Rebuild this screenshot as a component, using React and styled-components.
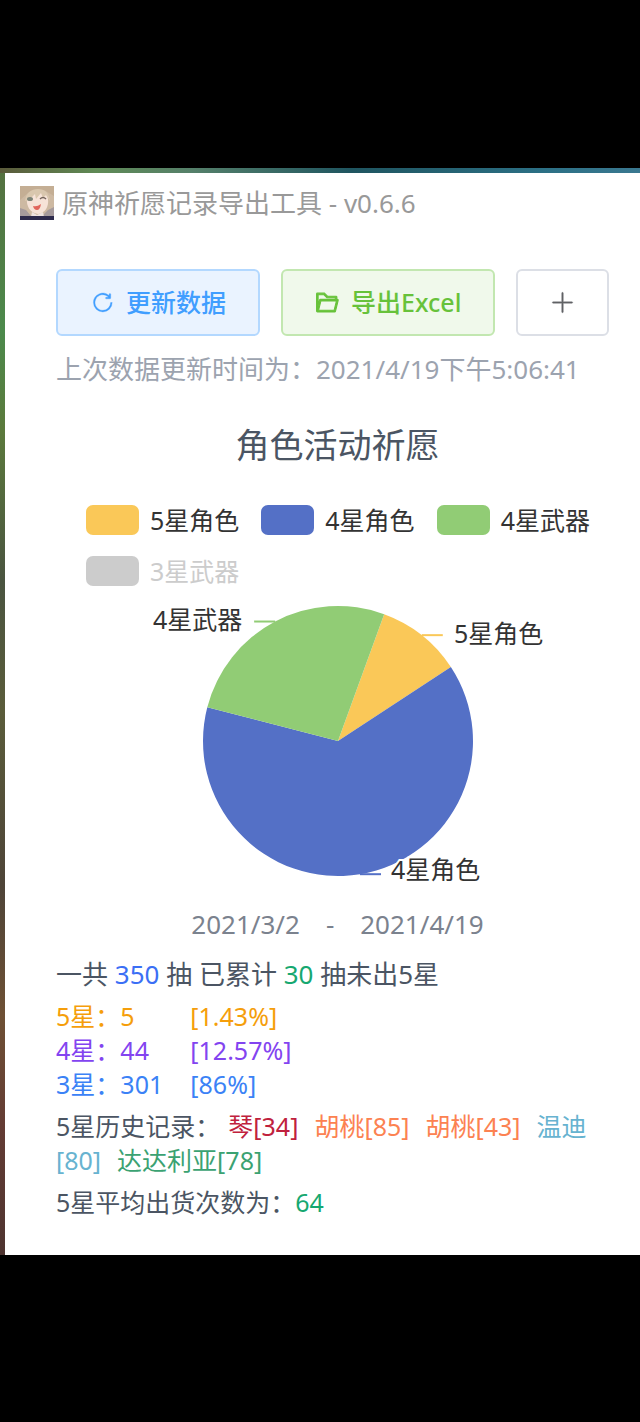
import React from 'react'
import styled, { createGlobalStyle } from 'styled-components'

const legend = [
  { name: '5星角色', color: '#fac858' },
  { name: '4星角色', color: '#5470c6' },
  { name: '4星武器', color: '#91cc75' },
  { name: '3星武器', color: '#cccccc', off: true },
]

const slices = [
  { name: '5星角色', value: 5, color: '#fac858', x: 336, y: 43 },
  { name: '4星角色', value: 31, color: '#5470c6', x: 273, y: 279 },
  { name: '4星武器', value: 13, color: '#91cc75', x: 35, y: 29 },
]

const rates = [
  { name: '5星', count: 5, percent: '1.43%', color: '#f59e0b' },
  { name: '4星', count: 44, percent: '12.57%', color: '#8344f0' },
  { name: '3星', count: 301, percent: '86%', color: '#3b82f6' },
]

const history = [
  { name: '琴', count: 34, color: '#c0213d' },
  { name: '胡桃', count: 85, color: '#fc8251' },
  { name: '胡桃', count: 43, color: '#fc8251' },
  { name: '温迪', count: 80, color: '#67b3d0' },
  { name: '达达利亚', count: 78, color: '#3ba272' },
]

const CX = 220
const CY = 141
const R = 135
const START = 20

const point = (deg) => {
  const rad = (deg * Math.PI) / 180
  return [CX + R * Math.sin(rad), CY - R * Math.cos(rad)]
}

const PieChart = () => {
  const total = slices.reduce((sum, item) => sum + item.value, 0)
  let angle = START

  const parts = slices.map((item) => {
    const from = angle
    const to = angle + (item.value / total) * 360
    angle = to
    const [x1, y1] = point(from)
    const [x2, y2] = point(to)
    const [mx, my] = point((from + to) / 2)
    const large = to - from > 180 ? 1 : 0
    return {
      ...item,
      path: `M${CX} ${CY}L${x1} ${y1}A${R} ${R} 0 ${large} 1 ${x2} ${y2}Z`,
      line: `M${mx} ${my}H${mx < CX ? mx - 21 : mx + 21}`,
    }
  })

  return (
    <Chart viewBox="0 0 440 290" role="img" aria-label="角色活动祈愿">
      {parts.map((item) => (
        <path key={item.name} d={item.path} fill={item.color} />
      ))}
      {parts.map((item) => (
        <path key={item.name} d={item.line} stroke={item.color} strokeWidth="2" />
      ))}
      {parts.map((item) => (
        <ChartLabel key={item.name} x={item.x} y={item.y}>
          {item.name}
        </ChartLabel>
      ))}
    </Chart>
  )
}

const Avatar = () => (
  <AvatarIcon viewBox="0 0 34 34" aria-hidden="true">
    <rect width="34" height="34" fill="#cdb9a2" />
    <path d="M0 0h34v10L24 4 9 6 0 14z" fill="#c4ae94" />
    <path d="M7 12C9 6 13 5 18 5s9 2 10 8c1 8-3 14-10 15C10 27 6 20 7 12z" fill="#f6e3d8" />
    <path d="M5 15C6 7 11 3 18 3c7 0 11 4 12 12l-4-6-3 3-2-5-5 6-1-5-6 6z" fill="#d9c7ae" />
    <ellipse cx="10" cy="13" rx="3" ry="2" fill="#7d8478" />
    <path d="M20 13q3-3 6 0" stroke="#75655c" strokeWidth="1.4" fill="none" />
    <path d="M13 20q4 1 8-2-1 6-4 6t-4-4z" fill="#e0655c" />
    <path d="M0 22l6 2 5 6h11l6-6 6-3v13H0z" fill="#a59a9c" />
    <path d="M12 26l5 3 6-3 1 5H11z" fill="#eee3df" />
    <rect y="30" width="34" height="4" fill="#2d2a4c" />
  </AvatarIcon>
)

const App = () => (
  <Screen>
    <GlobalStyle />
    <Desktop>
      <Window>
        <TitleBar>
          <Avatar />
          <span>原神祈愿记录导出工具 - v0.6.6</span>
        </TitleBar>
        <Main>
          <Toolbar>
            <Button $kind="primary">
              <ButtonIcon viewBox="0 0 1024 1024">
                <path d="M784.512 230.272v-50.56a32 32 0 1 1 64 0v149.056a32 32 0 0 1-32 32H667.52a32 32 0 1 1 0-64h92.992A320 320 0 1 0 524.8 833.152a320 320 0 0 0 320-320h64a384 384 0 0 1-384 384 384 384 0 0 1-384-384 384 384 0 0 1 643.712-282.88z" />
              </ButtonIcon>
              更新数据
            </Button>
            <Button $kind="success">
              <ButtonIcon viewBox="0 0 1024 1024" $bold>
                <path d="M878.08 448H241.92l-96 384h636.16l96-384zM832 384v-64H485.76L357.504 192H128v448l57.344-229.76A32 32 0 0 1 216.32 384H832zm-24.96 512H96a32 32 0 0 1-32-32V160a32 32 0 0 1 32-32h287.872l128.384 128H864a32 32 0 0 1 32 32v96h23.04a32 32 0 0 1 31.04 39.744l-112 448A32 32 0 0 1 807.04 896z" />
              </ButtonIcon>
              导出Excel
            </Button>
            <Button aria-label="添加">
              <ButtonIcon viewBox="0 0 1024 1024">
                <path d="M480 480V128a32 32 0 0 1 64 0v352h352a32 32 0 1 1 0 64H544v352a32 32 0 1 1-64 0V544H128a32 32 0 0 1 0-64h352z" />
              </ButtonIcon>
            </Button>
          </Toolbar>
          <Updated>上次数据更新时间为：2021/4/19下午5:06:41</Updated>
          <Title>角色活动祈愿</Title>
          <Legend>
            {legend.map((item) => (
              <LegendItem key={item.name} $off={item.off}>
                <Swatch $color={item.color} />
                {item.name}
              </LegendItem>
            ))}
          </Legend>
          <PieChart />
          <Period>
            <span>2021/3/2</span>
            <span>-</span>
            <span>2021/4/19</span>
          </Period>
          <Summary>
            一共 <Color $color="#3b6ff5">350</Color> 抽 已累计{' '}
            <Color $color="#16a870">30</Color> 抽未出5星
          </Summary>
          <Rates>
            {rates.map((item) => (
              <Rate key={item.name} $color={item.color}>
                <span>{item.name}：</span>
                <Count>{item.count}</Count>
                <span>[{item.percent}]</span>
              </Rate>
            ))}
          </Rates>
          <Line>
            5星历史记录：
            {history.map((item, i) => (
              <React.Fragment key={i}>
                <Record $color={item.color}>
                  {item.name}[{item.count}]
                </Record>
                <wbr />
              </React.Fragment>
            ))}
          </Line>
          <Line>
            5星平均出货次数为：<Color $color="#16a870">64</Color>
          </Line>
        </Main>
      </Window>
    </Desktop>
  </Screen>
)

export default App

const GlobalStyle = createGlobalStyle`
  * {
    box-sizing: border-box;
  }
  body {
    margin: 0;
    background: #000;
    font-family: 'Noto Sans', 'Noto Sans CJK SC', sans-serif;
    font-size: 25px;
    line-height: 34px;
    color: #4b5563;
  }
`

const Screen = styled.div`
  min-height: 100vh;
  display: flex;
  flex-direction: column;
  justify-content: center;
`

const Desktop = styled.div`
  padding: 5px 0 0 5px;
  background:
    linear-gradient(to right, #5a5a3a, #5f8a55 15%, #55806a 30%, #1f5560 55%, #2c7085 85%, #3a7890) top / 100% 5px no-repeat,
    linear-gradient(#54703f, #4c8a4c 15%, #5b7a3c 24%, #4a5440 38%, #5a5c3a 50%, #4e4438 66%, #6e5034 78%, #643c34 88%, #4e3430);
`

const Window = styled.div`
  background: #fff;
`

const TitleBar = styled.header`
  display: flex;
  align-items: center;
  gap: 8px;
  padding: 13px 15px 0;
  font-size: 26px;
  color: #999;
`

const AvatarIcon = styled.svg`
  width: 34px;
  height: 34px;
`

const Main = styled.main`
  padding: 49px 21px 28px 51px;
`

const Toolbar = styled.div`
  display: flex;
  gap: 21px;
  margin-bottom: 16px;
`

const kinds = {
  primary: ['#409eff', '#eaf3ff', '#b3d8ff'],
  success: ['#67c23a', '#f0f9eb', '#c2e7b0'],
  plain: ['#606266', '#ffffff', '#dcdfe6'],
}

const Button = styled.button`
  display: flex;
  align-items: center;
  gap: 11px;
  height: 67px;
  padding: 0 32px;
  font: inherit;
  font-weight: 500;
  color: ${({ $kind = 'plain' }) => kinds[$kind][0]};
  background: ${({ $kind = 'plain' }) => kinds[$kind][1]};
  border: 2px solid ${({ $kind = 'plain' }) => kinds[$kind][2]};
  border-radius: 6px;
  cursor: pointer;
`

const ButtonIcon = styled.svg`
  width: 25px;
  height: 25px;
  fill: currentColor;
  stroke: currentColor;
  stroke-width: ${({ $bold }) => ($bold ? 44 : 14)};
`

const Updated = styled.p`
  margin: 0 0 38px;
  font-size: 26px;
  color: #9ca3af;
`

const Title = styled.h1`
  margin: 0 0 39px;
  font-size: 34px;
  font-weight: 400;
  line-height: 42px;
  text-align: center;
`

const Legend = styled.ul`
  display: flex;
  flex-wrap: wrap;
  gap: 21px 22px;
  margin: 0;
  padding: 0 20px 0 30px;
  list-style: none;
`

const LegendItem = styled.li`
  display: flex;
  align-items: center;
  gap: 11px;
  height: 30px;
  color: ${({ $off }) => ($off ? '#ccc' : '#333')};
`

const Swatch = styled.span`
  width: 53px;
  height: 30px;
  border-radius: 7px;
  background: ${({ $color }) => $color};
`

const Chart = styled.svg`
  display: block;
  width: 100%;
  max-width: 440px;
  margin: 14px auto 17px;
`

const ChartLabel = styled.text`
  font-size: 25px;
  fill: #333;
  stroke: #fff;
  stroke-width: 4px;
  paint-order: stroke;
`

const Period = styled.p`
  display: flex;
  justify-content: center;
  gap: 26px;
  margin: 0 0 16px;
  font-size: 26px;
  color: #7b828e;
`

const Line = styled.p`
  margin: 0 0 8px;
`

const Summary = styled(Line)`
  font-size: 26px;
`

const Color = styled.span`
  color: ${({ $color }) => $color};
`

const Rates = styled.ul`
  margin: 0 0 8px;
  padding: 0;
  list-style: none;
`

const Rate = styled.li`
  display: flex;
  color: ${({ $color }) => $color};
`

const Count = styled.span`
  width: 70px;
`

const Record = styled(Color)`
  margin: 0 8px;
`
